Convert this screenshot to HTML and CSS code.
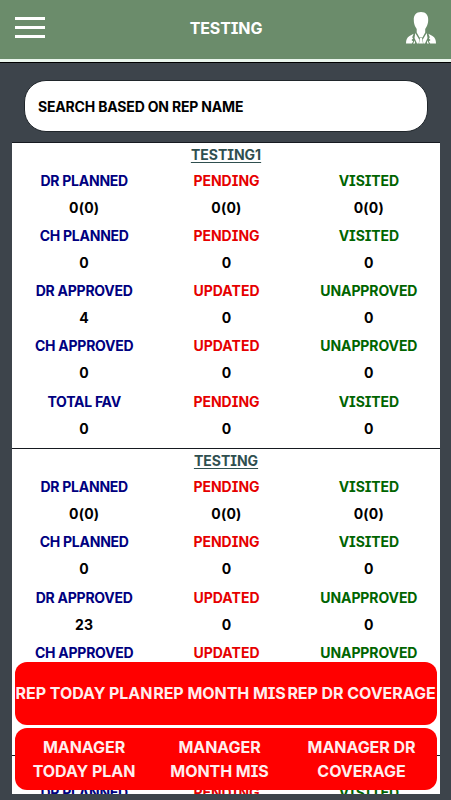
FILE: index.html
```html
<!DOCTYPE html>
<html lang="en">
<head>
    <meta charset="UTF-8">
    <meta name="viewport" content="width=device-width, initial-scale=1.0">
    <title>Testing</title>
    <link rel="stylesheet" href="styles.css">
</head>
<body>
    <header>
        <button class="menu-btn" type="button" aria-label="Menu">
            <span></span>
            <span></span>
            <span></span>
        </button>
        <h1>TESTING</h1>
        <svg class="user-icon" viewBox="0 0 32 34" width="32" height="34">
            <path d="M16 1C11 1 8.600 4.400 8.800 9c0 2.600.6 5 1.700 7l1.200 2v3.500L14.500 26.500h3L20.200 21.500V18l1.200-2c1.100-2 1.800-4.400 1.800-7C23.400 4.400 21 1 16 1z"/>
            <path d="M8.600 22.800L4.500 25C2 26.500 1 29 1 32.500h5.800l1.400-2-1.700-1.500 1.600-1.400-.9-1.400z"/>
            <path d="M23.400 22.800l4.100 2.200c2.500 1.500 3.500 4 3.500 7.500h-5.800l-1.400-2 1.700-1.500-1.600-1.400.9-1.400z"/>
            <path d="M10.300 22l-.8 5L12 32.500h1.700l.5-4zM21.700 22l.8 5L20 32.500h-1.700l-.5-4zM15 27h2l1 5.500h-4zM10 29.500v3H8zM22 29.500v3h2z"/>
        </svg>
    </header>

    <main>
        <input class="search" type="text" placeholder="SEARCH BASED ON REP NAME">

        <div class="content">
            <div class="rep-list" id="repList"></div>

            <div class="actions">
                <div class="action-bar">
                    <button type="button">REP TODAY PLAN</button>
                    <button type="button">REP MONTH MIS</button>
                    <button type="button">REP DR COVERAGE</button>
                </div>
                <div class="action-bar">
                    <button type="button">MANAGER<br>TODAY PLAN</button>
                    <button type="button">MANAGER<br>MONTH MIS</button>
                    <button type="button">MANAGER DR<br>COVERAGE</button>
                </div>
            </div>
        </div>
    </main>

    <script>
        var labels = [
            ["DR PLANNED", "PENDING", "VISITED"],
            ["CH PLANNED", "PENDING", "VISITED"],
            ["DR APPROVED", "UPDATED", "UNAPPROVED"],
            ["CH APPROVED", "UPDATED", "UNAPPROVED"],
            ["TOTAL FAV", "PENDING", "VISITED"]
        ];

        var reps = [
            { name: "TESTING1", values: [["0(0)", "0(0)", "0(0)"], [0, 0, 0], [4, 0, 0], [0, 0, 0], [0, 0, 0]] },
            { name: "TESTING", values: [["0(0)", "0(0)", "0(0)"], [0, 0, 0], [23, 0, 0], [0, 0, 0], [0, 0, 0]] },
            { name: "TESTING", values: [["0(0)", "0(0)", "0(0)"]] }
        ];

        var repList = document.getElementById("repList");

        reps.forEach(function (rep) {
            var html = `<h2>${rep.name}</h2>`;
            rep.values.forEach(function (row, i) {
                html += `<div class="stats">`;
                row.forEach(function (value, j) {
                    html += `<div class="stat"><span class="label">${labels[i][j]}</span><span class="value">${value}</span></div>`;
                });
                html += `</div>`;
            });

            var section = document.createElement("section");
            section.classList.add("rep");
            section.innerHTML = html;
            repList.appendChild(section);
        });
    </script>
</body>
</html>
```
FILE: styles.css
```css
* {
    box-sizing: border-box;
}

body {
    font-family: Inter, "Noto Sans", sans-serif;
    font-feature-settings: "cv08";
    font-weight: 700;
    margin: 0;
    height: 100vh;
    display: flex;
    flex-direction: column;
    overflow: hidden;
    background-color: #3d444b;
    color: #000000;
}

header {
    display: grid;
    grid-template-columns: 32px 1fr 32px;
    align-items: center;
    height: 63px;
    padding: 0 14px;
    background-color: #6b8c6b;
    border-bottom: 1px solid #000000;
    box-shadow: inset 0 -3px #e9f5ec;
    color: #ffffff;
}

h1 {
    margin: 0 0 6px 1px;
    font-size: 16px;
    letter-spacing: -0.1px;
    text-align: center;
}

button {
    padding: 0;
    border: none;
    background: none;
    color: inherit;
    font: inherit;
    font-feature-settings: inherit;
    letter-spacing: inherit;
    cursor: pointer;
}

.menu-btn {
    display: flex;
    flex-direction: column;
    gap: 6px;
    width: 30px;
    margin: 0 0 7px 1px;
}

.menu-btn span {
    height: 3px;
    background-color: #ffffff;
}

.user-icon {
    margin-bottom: 6px;
    fill: #ffffff;
}

main {
    flex: 1;
    min-height: 0;
    display: flex;
    flex-direction: column;
    padding: 17px 11px 6px 12px;
}

.search {
    height: 52px;
    margin: 0 12px 10px;
    padding: 0 13px;
    border: 1px solid #20262b;
    border-radius: 22px;
    background-color: #ffffff;
    font: inherit;
    font-feature-settings: inherit;
    font-size: 14px;
    letter-spacing: -0.18px;
    outline: none;
}

.search::placeholder {
    color: #000000;
    opacity: 1;
}

.content {
    position: relative;
    flex: 1;
    min-height: 0;
}

.rep-list {
    height: 100%;
    overflow: hidden;
    background-color: #ffffff;
}

.rep {
    height: 306.4px;
    border-top: 1px solid #161a20;
}

h2 {
    height: 23.6px;
    margin: 0;
    font-size: 14px;
    line-height: 24px;
    text-align: center;
    text-decoration: underline;
    text-underline-offset: 2px;
    color: #2f4f4f;
}

.stats {
    display: grid;
    grid-template-columns: repeat(3, 1fr);
    height: 55.3px;
    padding-left: 1px;
}

.stat {
    display: flex;
    flex-direction: column;
    align-items: center;
    font-size: 14px;
    line-height: 27px;
}

.value {
    letter-spacing: 0.2px;
}

.label {
    color: #000080;
    letter-spacing: -0.25px;
}

.stat:nth-child(2) .label {
    color: #e60000;
    letter-spacing: 0;
}

.stat:nth-child(3) .label {
    color: #006400;
    letter-spacing: -0.1px;
}

/* buttons float over the list */
.actions {
    position: absolute;
    left: 3px;
    right: 3px;
    bottom: 4px;
    display: flex;
    flex-direction: column;
    gap: 3px;
}

.action-bar {
    display: grid;
    grid-template-columns: 138px 133px 151px;
    height: 62.5px;
    border-radius: 12px;
    background-color: #ff0000;
    color: #ffeeee;
    font-size: 16px;
    line-height: 24px;
    letter-spacing: -0.05px;
    white-space: nowrap;
}
```
